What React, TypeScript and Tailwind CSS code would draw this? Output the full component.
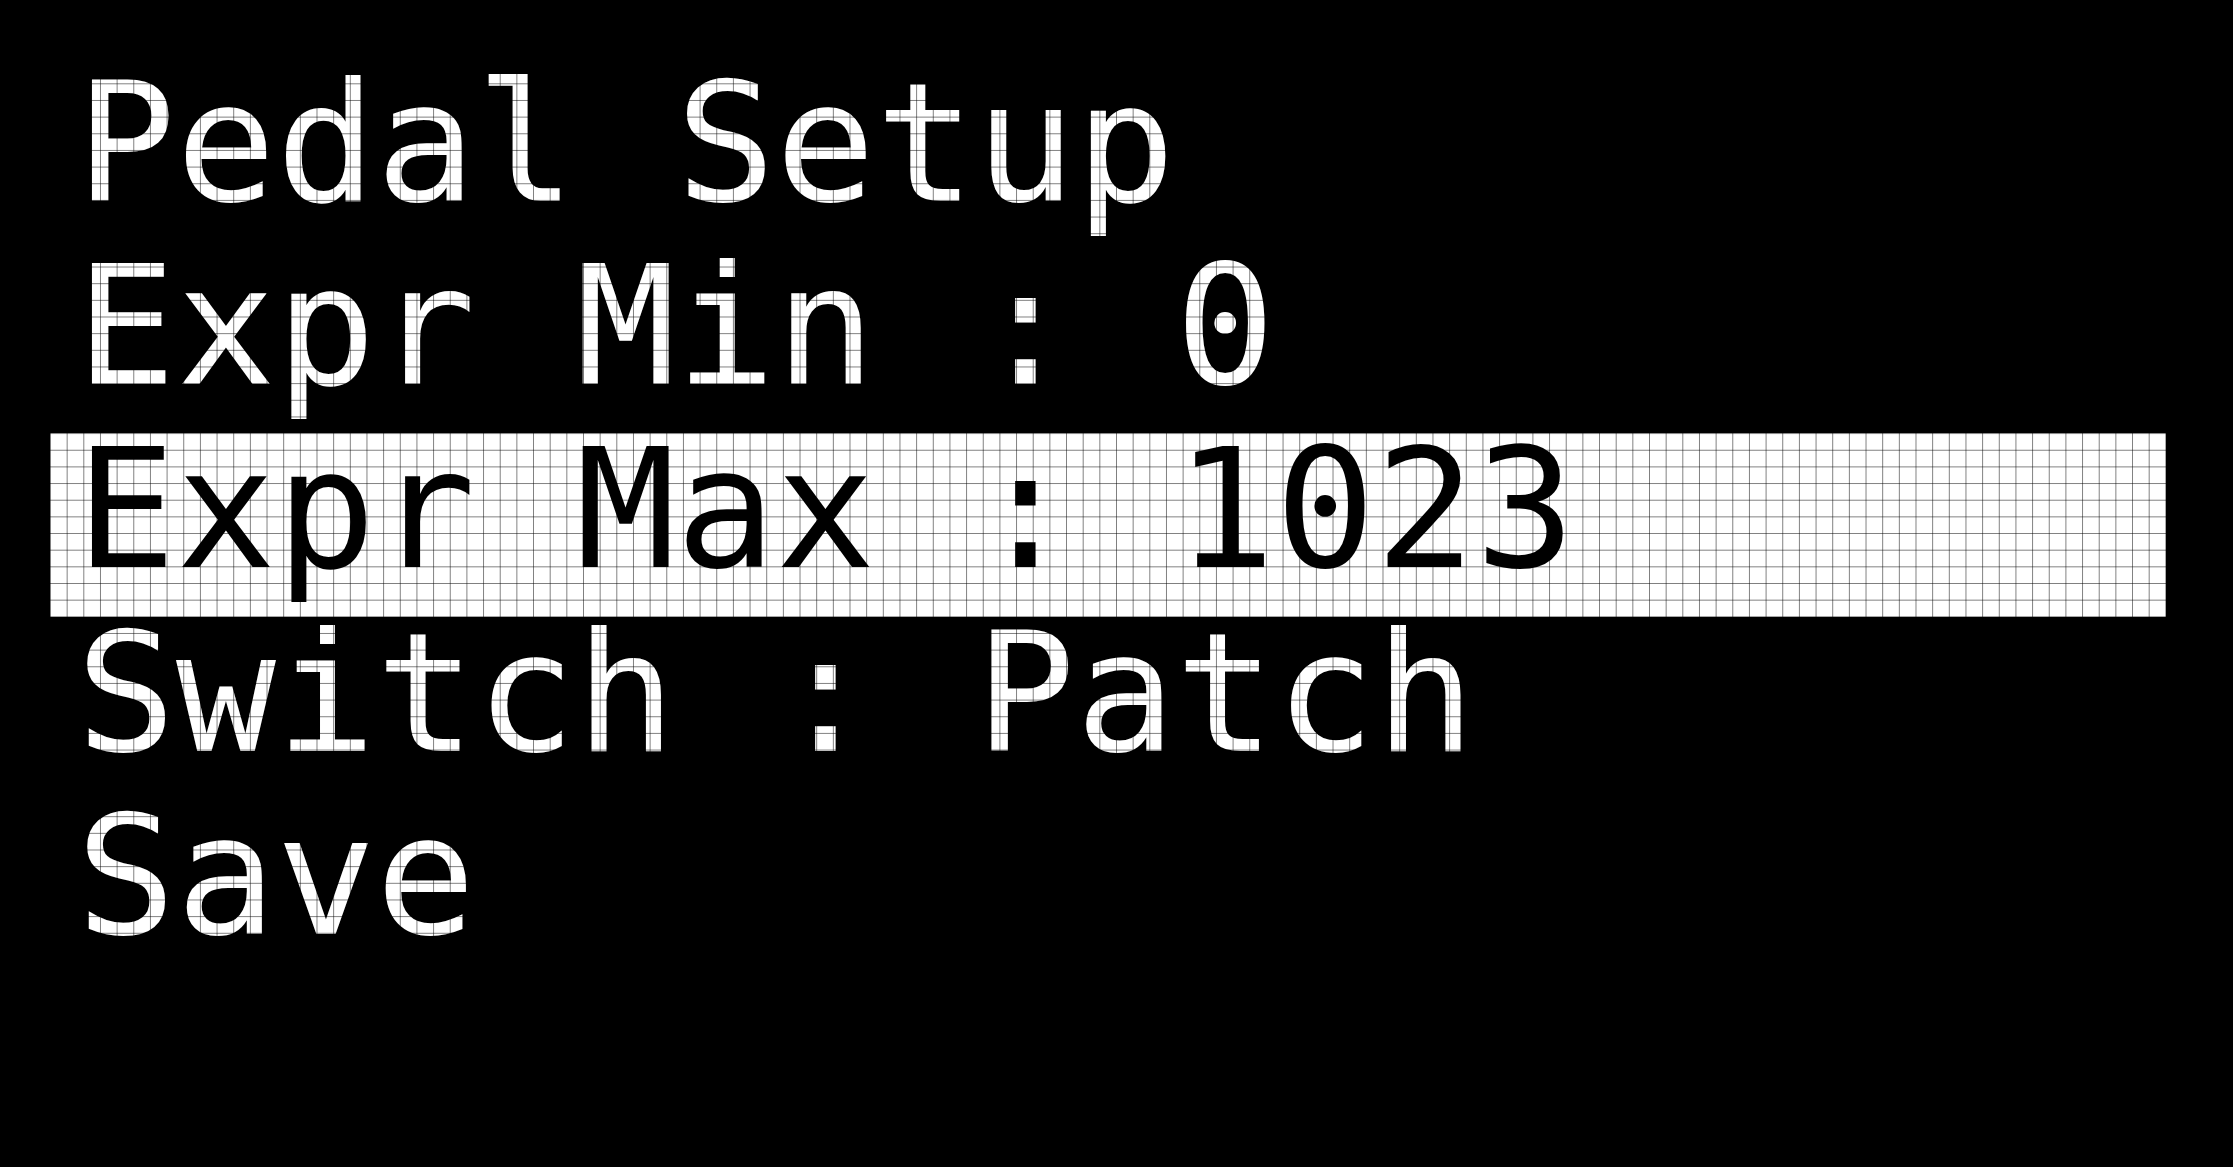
import React from "react";

type Item = { text: string; selected?: boolean };

const items: Item[] = [
  { text: "Pedal Setup" },
  { text: "Expr Min : 0" },
  { text: "Expr Max : 1023", selected: true },
  { text: "Switch : Patch" },
  { text: "Save" },
];

export default function App() {
  return (
    <div className="w-[2233px] h-[1167px] bg-black p-[50px] overflow-hidden">
      <div className="relative w-[2133px] h-[1067px] bg-black pt-[16.664px]">
        <div className="flex flex-col">
          {items.map((it) => (
            <div
              key={it.text}
              className={
                it.selected
                  ? "h-[183.3px] w-[2116.3px] bg-white text-black"
                  : "h-[183.3px] w-[2116.3px] text-white"
              }
            >
              <div className="pl-[26px] leading-[153px] text-[166px] whitespace-pre font-['DejaVu_Sans_Mono','Liberation_Mono',monospace]">
                {it.text}
              </div>
            </div>
          ))}
        </div>
        <div className="pointer-events-none absolute inset-0 mix-blend-multiply bg-[linear-gradient(to_right,rgba(0,0,0,0.5)_1px,transparent_1px),linear-gradient(to_bottom,rgba(0,0,0,0.5)_1px,transparent_1px)] bg-[length:16.664px_16.664px]" />
      </div>
    </div>
  );
}
